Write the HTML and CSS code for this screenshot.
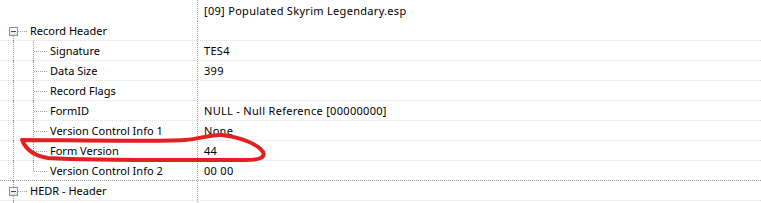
FILE: index.html
```html
<!DOCTYPE html>
<html>
<head>
<meta charset="utf-8">
<link rel="stylesheet" href="styles.css">
</head>
<body>
<div class="tree">
  <div class="row head">
    <div class="name"></div>
    <div class="val">[09] Populated Skyrim Legendary.esp</div>
  </div>
  <div class="row">
    <div class="name"><span class="g first"><span class="box"></span></span><span class="label">Record Header</span></div>
    <div class="val"></div>
  </div>
  <div class="row">
    <div class="name"><span class="g line"></span><span class="g tee"></span><span class="label">Signature</span></div>
    <div class="val">TES4</div>
  </div>
  <div class="row">
    <div class="name"><span class="g line"></span><span class="g tee"></span><span class="label">Data Size</span></div>
    <div class="val">399</div>
  </div>
  <div class="row">
    <div class="name"><span class="g line"></span><span class="g tee"></span><span class="label">Record Flags</span></div>
    <div class="val"></div>
  </div>
  <div class="row">
    <div class="name"><span class="g line"></span><span class="g tee"></span><span class="label">FormID</span></div>
    <div class="val">NULL - Null Reference [00000000]</div>
  </div>
  <div class="row">
    <div class="name"><span class="g line"></span><span class="g tee"></span><span class="label">Version Control Info 1</span></div>
    <div class="val">None</div>
  </div>
  <div class="row">
    <div class="name"><span class="g line"></span><span class="g tee"></span><span class="label">Form Version</span></div>
    <div class="val">44</div>
  </div>
  <div class="row sep">
    <div class="name"><span class="g line"></span><span class="g end"></span><span class="label">Version Control Info 2</span></div>
    <div class="val">00 00</div>
  </div>
  <div class="row">
    <div class="name"><span class="g mid"><span class="box"></span></span><span class="label">HEDR - Header</span></div>
    <div class="val"></div>
  </div>
  <div class="row">
    <div class="name"><span class="g line"></span></div>
    <div class="val"></div>
  </div>
  <svg class="mark" width="761" height="203" viewBox="0 0 761 203">
    <path d="M22,140 C60,140 150,142 185,140 C200,139 212,134 222,135 C240,137 258,144 263,152 C266,158 258,160 245,160 C180,160 100,161 48,158 C35,156 26,150 22,140" fill="none" stroke="#e21f22" stroke-width="4" stroke-linecap="round"/>
  </svg>
</div>
</body>
</html>
```
FILE: styles.css
```css
body {
  margin: 0;
  background: #fff;
  font-family: "Noto Sans", sans-serif;
  font-size: 11px;
  color: #000;
}
.tree {
  position: relative;
  width: 761px;
  height: 203px;
  overflow: hidden;
}
.row {
  display: flex;
  height: 20px;
  box-sizing: border-box;
  border-bottom: 1px dotted #dedede;
}
.row.head {
  height: 21px;
  border-bottom: none;
}
.row.sep {
  border-bottom-color: #9a9a9a;
}
.name {
  width: 198px;
  flex: none;
  box-sizing: border-box;
  border-right: 1px dotted #a0a0a0;
  padding-left: 4px;
  display: flex;
  align-items: stretch;
}
.val {
  padding-left: 6px;
  display: flex;
  align-items: center;
  line-height: 19px;
  white-space: nowrap;
  letter-spacing: 0.3px;
}
.label {
  padding-left: 6px;
  display: flex;
  align-items: center;
  line-height: 19px;
  white-space: nowrap;
}
.g {
  width: 20px;
  flex: none;
  position: relative;
}
.g.line::before,
.g.tee::before,
.g.mid::before {
  content: "";
  position: absolute;
  left: 9px;
  top: 0;
  bottom: -1px;
  border-left: 1px dotted #a0a0a0;
}
.g.end::before {
  content: "";
  position: absolute;
  left: 9px;
  top: 0;
  height: 10px;
  border-left: 1px dotted #a0a0a0;
}
.g.first::before {
  content: "";
  position: absolute;
  left: 9px;
  top: 15px;
  bottom: -1px;
  border-left: 1px dotted #a0a0a0;
}
.g.tee::after,
.g.end::after {
  content: "";
  position: absolute;
  left: 10px;
  right: -3px;
  top: 10px;
  border-top: 1px dotted #a0a0a0;
}
.g.first::after,
.g.mid::after {
  content: "";
  position: absolute;
  left: 14px;
  right: -3px;
  top: 10px;
  border-top: 1px dotted #a0a0a0;
}
.box {
  position: absolute;
  left: 5px;
  top: 6px;
  width: 9px;
  height: 9px;
  box-sizing: border-box;
  border: 1px solid #8f8f8f;
  background: linear-gradient(#ffffff, #e4e4e4);
  z-index: 1;
}
.box::after {
  content: "";
  position: absolute;
  left: 1px;
  top: 3px;
  width: 5px;
  height: 1px;
  background: #2f4f80;
}
.mark {
  position: absolute;
  left: 0;
  top: 0;
  pointer-events: none;
}
```
